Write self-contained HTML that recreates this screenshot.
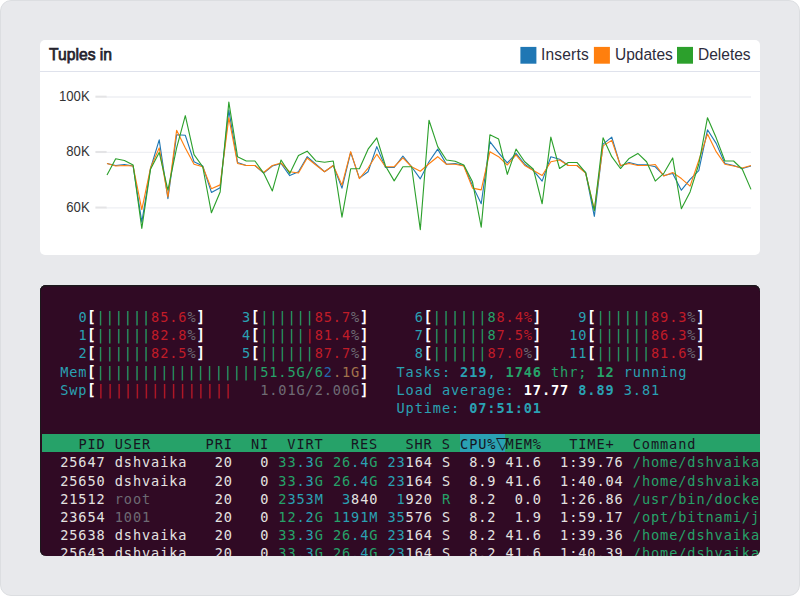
<!DOCTYPE html>
<html lang="en"><head><meta charset="utf-8"><title>Tuples in</title>
<style>
html,body{margin:0;padding:0;background:#fff;}
body{width:800px;height:596px;position:relative;overflow:hidden;font-family:"Liberation Sans",sans-serif;}
.panel{position:absolute;left:0;top:0;width:798px;height:594px;border:1px solid #dcdee1;border-radius:11px;background:#e8e9ec;}
.card{position:absolute;left:40px;top:40px;width:720px;height:215px;background:#fff;border-radius:5px;}
.sep{position:absolute;left:40px;top:70.6px;width:720px;height:1.3px;background:#dfe2ec;}
.title{position:absolute;left:48.8px;top:44.9px;font-size:16.6px;font-weight:normal;-webkit-text-stroke:0.75px #25232d;color:#25232d;line-height:20px;white-space:nowrap;transform:scaleX(0.945);transform-origin:0 0;}
.lg{position:absolute;top:45.2px;font-size:16.7px;color:#2d2c3c;line-height:20px;white-space:nowrap;transform:scaleX(0.93);transform-origin:0 0;}
.sq{position:absolute;top:46.9px;width:15.6px;height:16.8px;}
.yl{position:absolute;left:40px;width:49.7px;text-align:right;font-size:14.3px;color:#333;line-height:16px;transform:scaleX(0.92);transform-origin:100% 0;}
.chart{position:absolute;left:0;top:0;}
.term{position:absolute;left:40px;top:285px;width:720px;height:270.5px;background:#300a24;border-radius:6px;overflow:hidden;
 font-family:"DejaVu Sans Mono","Liberation Mono",monospace;font-size:13.6px;letter-spacing:0.901px;line-height:18px;box-shadow:inset 0 1px 0 #1c181c, inset 1px 0 0 #1c181c, inset 0 2px 0 rgba(28,24,28,0.45);}
.row{position:absolute;left:0;width:720px;height:18px;white-space:pre;}
.s{position:absolute;top:0;}
.hband{position:absolute;right:0;background:#26a269;}
.hsel{position:absolute;background:#2aa1b3;}
.tri{position:absolute;font-family:"DejaVu Sans",sans-serif;font-size:17px;line-height:18px;color:#171421;}
.c{color:#2aa1b3} .g{color:#26a269} .r{color:#c01c28} .k{color:#6f6c75} .k2{color:#6d6a73}
.w{color:#e4e2e0} .bw{color:#fff;font-weight:bold} .br{color:#fff;font-weight:bold;font-size:14.6px;margin-left:-0.4px;transform:scaleY(1.045);transform-origin:50% 16.5px} .bc{color:#2aa1b3;font-weight:bold} .bg{color:#26a269;font-weight:bold}
.bl{color:#2566b0} .y{color:#a2734c} .h{color:#171421}
</style></head><body>
<div class="panel"></div>
<div class="card"></div>
<div class="title">Tuples in</div>
<div class="lg" style="left:541.3px;letter-spacing:0.2px">Inserts</div>
<div class="lg" style="left:614.6px">Updates</div>
<div class="lg" style="left:698.2px">Deletes</div>
<div class="sep"></div>
<div class="yl" style="top:88.05px">100K</div>
<div class="yl" style="top:143.05px">80K</div>
<div class="yl" style="top:199.05px">60K</div>
<svg class="chart" width="800" height="596" viewBox="0 0 800 596"><line x1="106" x2="751" y1="97.0" y2="97.0" stroke="#eeeff3" stroke-width="1.3"/><line x1="95.4" x2="106.6" y1="96.7" y2="96.7" stroke="#e4e4e6" stroke-width="2.1"/><line x1="106" x2="751" y1="152.3" y2="152.3" stroke="#eeeff3" stroke-width="1.3"/><line x1="95.4" x2="106.6" y1="152.0" y2="152.0" stroke="#e4e4e6" stroke-width="2.1"/><line x1="106" x2="751" y1="207.85" y2="207.85" stroke="#eeeff3" stroke-width="1.3"/><line x1="95.4" x2="106.6" y1="207.54999999999998" y2="207.54999999999998" stroke="#e4e4e6" stroke-width="2.1"/><rect x="520.4" y="46.9" width="16" height="16.8" fill="#1f77b4"/><rect x="593.9" y="46.9" width="16" height="16.8" fill="#ff7f0e"/><rect x="677.0" y="46.9" width="16" height="16.8" fill="#2ca02c"/><polyline points="107.00,163.49 115.70,165.50 124.41,164.50 133.11,166.01 141.81,222.11 150.51,168.52 159.22,139.84 167.92,198.71 176.62,134.81 185.32,135.31 194.03,161.73 202.73,166.01 211.43,192.42 220.14,187.64 228.84,110.16 237.54,162.48 246.24,165.50 254.95,165.50 263.65,173.05 272.35,166.01 281.05,163.49 289.76,175.57 298.46,171.79 307.16,156.70 315.86,164.25 324.57,171.79 333.27,165.50 341.97,188.14 350.68,152.42 359.38,178.08 368.08,171.79 376.78,146.64 385.49,167.52 394.19,167.52 402.89,156.19 411.59,166.76 420.30,178.84 429.00,161.73 437.70,149.15 446.41,164.25 455.11,163.49 463.81,165.50 472.51,185.63 481.22,203.74 489.92,141.60 498.62,152.92 507.32,162.99 516.03,153.43 524.73,164.25 533.43,170.53 542.14,181.10 550.84,156.70 559.54,159.21 568.24,165.50 576.95,165.50 585.65,172.55 594.35,216.32 603.05,144.12 611.76,137.08 620.46,166.01 629.16,162.48 637.86,164.75 646.57,164.75 655.27,166.76 663.97,175.57 672.68,173.55 681.38,190.16 690.08,179.34 698.78,170.53 707.49,129.78 716.19,143.36 724.89,163.49 733.59,165.50 742.30,168.52 751.00,166.01" fill="none" stroke="#1f77b4" stroke-width="1.12" stroke-linejoin="round"/><polyline points="107.00,163.49 115.70,166.01 124.41,165.50 133.11,166.01 141.81,209.53 150.51,168.02 159.22,147.89 167.92,196.95 176.62,130.28 185.32,147.89 194.03,164.25 202.73,166.76 211.43,188.65 220.14,184.87 228.84,117.70 237.54,163.49 246.24,165.50 254.95,165.50 263.65,172.55 272.35,165.50 281.05,162.99 289.76,171.79 298.46,173.05 307.16,157.96 315.86,165.00 324.57,171.79 333.27,165.50 341.97,185.13 350.68,151.67 359.38,178.58 368.08,168.02 376.78,154.18 385.49,166.76 394.19,166.76 402.89,157.96 411.59,166.76 420.30,171.29 429.00,163.74 437.70,156.70 446.41,164.25 455.11,164.25 463.81,166.01 472.51,188.14 481.22,189.91 489.92,151.67 498.62,156.70 507.32,165.00 516.03,154.94 524.73,165.50 533.43,170.53 542.14,175.57 550.84,161.73 559.54,159.97 568.24,165.50 576.95,165.50 585.65,173.05 594.35,209.53 603.05,145.88 611.76,140.35 620.46,165.50 629.16,163.49 637.86,165.50 646.57,165.50 655.27,164.50 663.97,176.07 672.68,172.55 681.38,178.58 690.08,186.13 698.78,160.47 707.49,134.06 716.19,151.67 724.89,164.25 733.59,166.01 742.30,168.02 751.00,165.50" fill="none" stroke="#ff7f0e" stroke-width="1.12" stroke-linejoin="round"/><polyline points="107.00,175.06 115.70,158.71 124.41,160.47 133.11,165.00 141.81,228.40 150.51,169.28 159.22,152.42 167.92,190.16 176.62,147.89 185.32,115.69 194.03,154.69 202.73,166.76 211.43,212.80 220.14,191.92 228.84,102.11 237.54,156.70 246.24,160.97 254.95,160.97 263.65,173.05 272.35,190.91 281.05,159.97 289.76,173.55 298.46,155.44 307.16,151.16 315.86,160.97 324.57,162.23 333.27,160.97 341.97,217.08 350.68,168.77 359.38,168.77 368.08,149.15 376.78,137.83 385.49,166.01 394.19,180.85 402.89,166.76 411.59,166.76 420.30,229.65 429.00,120.22 437.70,146.64 446.41,159.97 455.11,161.23 463.81,165.00 472.51,181.86 481.22,227.14 489.92,134.81 498.62,139.09 507.32,174.31 516.03,149.15 524.73,161.73 533.43,169.28 542.14,203.74 550.84,137.08 559.54,168.52 568.24,162.48 576.95,162.48 585.65,172.55 594.35,210.79 603.05,137.83 611.76,156.70 620.46,168.52 629.16,158.46 637.86,153.43 646.57,161.73 655.27,181.10 663.97,173.05 672.68,157.96 681.38,208.77 690.08,191.92 698.78,164.25 707.49,117.70 716.19,137.83 724.89,160.97 733.59,160.97 742.30,169.28 751.00,189.40" fill="none" stroke="#2ca02c" stroke-width="1.12" stroke-linejoin="round"/></svg>
<div class="term">
<div class="hband" style="top:149.10px;height:18.00px;left:2.35px"></div><div class="hsel" style="top:149.10px;height:18.00px;left:419.73px;width:45.70px"></div><span class="tri" style="left:456.05px;top:148.90px">▽</span>
<div class="row" style="top:23.00px"><span class="s c" style="left:38.39px">0</span><span class="s br" style="left:47.48px">[</span><span class="s g" style="left:56.56px">||||||</span><span class="s r" style="left:111.10px">85.6</span><span class="s k" style="left:147.45px">%</span><span class="s br" style="left:156.54px">]</span><span class="s c" style="left:201.99px">3</span><span class="s br" style="left:211.08px">[</span><span class="s g" style="left:220.17px">||||||</span><span class="s r" style="left:274.70px">85.7</span><span class="s k" style="left:311.06px">%</span><span class="s br" style="left:320.14px">]</span><span class="s c" style="left:374.68px">6</span><span class="s br" style="left:383.77px">[</span><span class="s g" style="left:392.86px">||||||</span><span class="s g" style="left:447.39px">8</span><span class="s r" style="left:456.48px">8.4%</span><span class="s br" style="left:492.84px">]</span><span class="s c" style="left:538.28px">9</span><span class="s br" style="left:547.37px">[</span><span class="s g" style="left:556.46px">||||||</span><span class="s r" style="left:610.99px">89.3</span><span class="s k" style="left:647.35px">%</span><span class="s br" style="left:656.44px">]</span></div>
<div class="row" style="top:41.00px"><span class="s c" style="left:38.39px">1</span><span class="s br" style="left:47.48px">[</span><span class="s g" style="left:56.56px">||||||</span><span class="s r" style="left:111.10px">82.8</span><span class="s k" style="left:147.45px">%</span><span class="s br" style="left:156.54px">]</span><span class="s c" style="left:201.99px">4</span><span class="s br" style="left:211.08px">[</span><span class="s g" style="left:220.17px">|||||</span><span class="s r" style="left:265.61px">|</span><span class="s r" style="left:274.70px">81.4</span><span class="s k" style="left:311.06px">%</span><span class="s br" style="left:320.14px">]</span><span class="s c" style="left:374.68px">7</span><span class="s br" style="left:383.77px">[</span><span class="s g" style="left:392.86px">||||||</span><span class="s g" style="left:447.39px">8</span><span class="s r" style="left:456.48px">7.5%</span><span class="s br" style="left:492.84px">]</span><span class="s c" style="left:529.19px">10</span><span class="s br" style="left:547.37px">[</span><span class="s g" style="left:556.46px">||||||</span><span class="s r" style="left:610.99px">86.3</span><span class="s k" style="left:647.35px">%</span><span class="s br" style="left:656.44px">]</span></div>
<div class="row" style="top:59.00px"><span class="s c" style="left:38.39px">2</span><span class="s br" style="left:47.48px">[</span><span class="s g" style="left:56.56px">||||||</span><span class="s r" style="left:111.10px">82.5</span><span class="s k" style="left:147.45px">%</span><span class="s br" style="left:156.54px">]</span><span class="s c" style="left:201.99px">5</span><span class="s br" style="left:211.08px">[</span><span class="s g" style="left:220.17px">||||||</span><span class="s r" style="left:274.70px">87.7</span><span class="s k" style="left:311.06px">%</span><span class="s br" style="left:320.14px">]</span><span class="s c" style="left:374.68px">8</span><span class="s br" style="left:383.77px">[</span><span class="s g" style="left:392.86px">||||||</span><span class="s r" style="left:447.39px">87.0</span><span class="s k" style="left:483.75px">%</span><span class="s br" style="left:492.84px">]</span><span class="s c" style="left:529.19px">11</span><span class="s br" style="left:547.37px">[</span><span class="s g" style="left:556.46px">||||||</span><span class="s r" style="left:610.99px">81.6</span><span class="s k" style="left:647.35px">%</span><span class="s br" style="left:656.44px">]</span></div>
<div class="row" style="top:78.00px"><span class="s c" style="left:20.21px">Mem</span><span class="s br" style="left:47.48px">[</span><span class="s g" style="left:56.56px">||||||||||||||||||</span><span class="s g" style="left:220.17px">51.5G/6</span><span class="s bl" style="left:283.79px">2</span><span class="s y" style="left:292.88px">.1G</span><span class="s br" style="left:320.14px">]</span><span class="s c" style="left:356.50px">Tasks: </span><span class="s bc" style="left:420.12px">219</span><span class="s c" style="left:447.39px">, </span><span class="s bg" style="left:465.57px">1746</span><span class="s g" style="left:501.93px"> thr; </span><span class="s bg" style="left:556.46px">12</span><span class="s c" style="left:574.64px"> running</span></div>
<div class="row" style="top:96.00px"><span class="s c" style="left:20.21px">Swp</span><span class="s br" style="left:47.48px">[</span><span class="s r" style="left:56.56px">|||||||||||||||</span><span class="s k" style="left:220.17px">1.01G/2.00G</span><span class="s br" style="left:320.14px">]</span><span class="s c" style="left:356.50px">Load average: </span><span class="s bw" style="left:483.75px">17.77</span><span class="s bc" style="left:538.28px">8.89</span><span class="s c" style="left:583.73px">3.81</span></div>
<div class="row" style="top:114.00px"><span class="s c" style="left:356.50px">Uptime: </span><span class="s bc" style="left:429.21px">07:51:01</span></div>
<div class="row" style="top:150.00px"><span class="s h" style="left:38.39px">PID USER      PRI  NI  VIRT   RES   SHR S</span><span class="s h" style="left:420.12px">CPU%</span><span class="s h" style="left:465.57px">MEM%   TIME+  Command</span></div>
<div class="row" style="top:168.00px"><span class="s w" style="left:20.21px">25647</span><span class="s w" style="left:74.74px">dshvaika</span><span class="s w" style="left:174.72px">20</span><span class="s w" style="left:220.17px">0</span><span class="s g" style="left:238.34px">33</span><span class="s c" style="left:256.52px">.3</span><span class="s g" style="left:274.70px">G</span><span class="s g" style="left:292.88px">26</span><span class="s c" style="left:311.06px">.4</span><span class="s g" style="left:329.23px">G</span><span class="s c" style="left:347.41px">23</span><span class="s w" style="left:365.59px">164</span><span class="s w" style="left:401.95px">S</span><span class="s w" style="left:429.21px">8.9</span><span class="s w" style="left:465.57px">41.6</span><span class="s w" style="left:520.10px">1:39.76</span><span class="s g" style="left:592.82px">/home/dshvaika</span></div>
<div class="row" style="top:187.00px"><span class="s w" style="left:20.21px">25650</span><span class="s w" style="left:74.74px">dshvaika</span><span class="s w" style="left:174.72px">20</span><span class="s w" style="left:220.17px">0</span><span class="s g" style="left:238.34px">33</span><span class="s c" style="left:256.52px">.3</span><span class="s g" style="left:274.70px">G</span><span class="s g" style="left:292.88px">26</span><span class="s c" style="left:311.06px">.4</span><span class="s g" style="left:329.23px">G</span><span class="s c" style="left:347.41px">23</span><span class="s w" style="left:365.59px">164</span><span class="s w" style="left:401.95px">S</span><span class="s w" style="left:429.21px">8.9</span><span class="s w" style="left:465.57px">41.6</span><span class="s w" style="left:520.10px">1:40.04</span><span class="s g" style="left:592.82px">/home/dshvaika</span></div>
<div class="row" style="top:205.00px"><span class="s w" style="left:20.21px">21512</span><span class="s k2" style="left:74.74px">root</span><span class="s w" style="left:174.72px">20</span><span class="s w" style="left:220.17px">0</span><span class="s g" style="left:238.34px">2</span><span class="s c" style="left:247.43px">353M</span><span class="s c" style="left:301.97px">3</span><span class="s w" style="left:311.06px">840</span><span class="s c" style="left:356.50px">1</span><span class="s w" style="left:365.59px">920</span><span class="s g" style="left:401.95px">R</span><span class="s w" style="left:429.21px">8.2</span><span class="s w" style="left:474.66px">0.0</span><span class="s w" style="left:520.10px">1:26.86</span><span class="s g" style="left:592.82px">/usr/bin/docke</span></div>
<div class="row" style="top:223.00px"><span class="s w" style="left:20.21px">23654</span><span class="s k2" style="left:74.74px">1001</span><span class="s w" style="left:174.72px">20</span><span class="s w" style="left:220.17px">0</span><span class="s g" style="left:238.34px">12</span><span class="s c" style="left:256.52px">.2</span><span class="s g" style="left:274.70px">G</span><span class="s g" style="left:292.88px">1</span><span class="s c" style="left:301.97px">191M</span><span class="s c" style="left:347.41px">35</span><span class="s w" style="left:365.59px">576</span><span class="s w" style="left:401.95px">S</span><span class="s w" style="left:429.21px">8.2</span><span class="s w" style="left:474.66px">1.9</span><span class="s w" style="left:520.10px">1:59.17</span><span class="s g" style="left:592.82px">/opt/bitnami/j</span></div>
<div class="row" style="top:241.00px"><span class="s w" style="left:20.21px">25638</span><span class="s w" style="left:74.74px">dshvaika</span><span class="s w" style="left:174.72px">20</span><span class="s w" style="left:220.17px">0</span><span class="s g" style="left:238.34px">33</span><span class="s c" style="left:256.52px">.3</span><span class="s g" style="left:274.70px">G</span><span class="s g" style="left:292.88px">26</span><span class="s c" style="left:311.06px">.4</span><span class="s g" style="left:329.23px">G</span><span class="s c" style="left:347.41px">23</span><span class="s w" style="left:365.59px">164</span><span class="s w" style="left:401.95px">S</span><span class="s w" style="left:429.21px">8.2</span><span class="s w" style="left:465.57px">41.6</span><span class="s w" style="left:520.10px">1:39.36</span><span class="s g" style="left:592.82px">/home/dshvaika</span></div>
<div class="row" style="top:259.00px"><span class="s w" style="left:20.21px">25643</span><span class="s w" style="left:74.74px">dshvaika</span><span class="s w" style="left:174.72px">20</span><span class="s w" style="left:220.17px">0</span><span class="s g" style="left:238.34px">33</span><span class="s c" style="left:256.52px">.3</span><span class="s g" style="left:274.70px">G</span><span class="s g" style="left:292.88px">26</span><span class="s c" style="left:311.06px">.4</span><span class="s g" style="left:329.23px">G</span><span class="s c" style="left:347.41px">23</span><span class="s w" style="left:365.59px">164</span><span class="s w" style="left:401.95px">S</span><span class="s w" style="left:429.21px">8.2</span><span class="s w" style="left:465.57px">41.6</span><span class="s w" style="left:520.10px">1:40.39</span><span class="s g" style="left:592.82px">/home/dshvaika</span></div>
</div>
</body></html>
